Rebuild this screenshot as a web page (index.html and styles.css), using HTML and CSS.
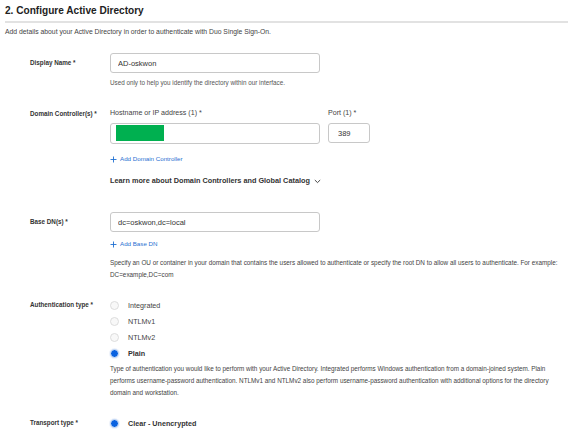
FILE: index.html
```html
<!DOCTYPE html>
<html lang="en">
<head>
    <meta charset="UTF-8">
    <title>Configure Active Directory</title>
    <link rel="stylesheet" href="styles.css">
</head>
<body>

<div class="page">
    <h2 class="step-title">2. Configure Active Directory</h2>
    <p class="intro">Add details about your Active Directory in order to authenticate with Duo Single Sign-On.</p>

    <div class="form">
        <!-- Display name -->
        <div class="field-label">Display Name *</div>
        <div class="field-body">
            <input class="text-input wide" type="text" value="AD-oskwon">
            <div class="hint">Used only to help you identify the directory within our interface.</div>
        </div>

        <!-- Domain controllers -->
        <div class="field-label">Domain Controller(s) *</div>
        <div class="field-body">
            <div class="dc-row">
                <div class="dc-col">
                    <div class="sub-label">Hostname or IP address (1) *</div>
                    <div class="text-input wide masked"><span class="redacted"></span></div>
                </div>
                <div class="dc-col">
                    <div class="sub-label">Port (1) *</div>
                    <input class="text-input port" type="text" value="389">
                </div>
            </div>
            <a class="add-link" href="#">
                <svg width="7" height="7" viewBox="0 0 7 7"><path d="M3.5 0.5v6M0.5 3.5h6" stroke="#1f6fd1" stroke-width="0.9" fill="none"/></svg>
                Add Domain Controller
            </a>
            <div class="learn-more">
                Learn more about Domain Controllers and Global Catalog
                <svg width="7" height="5" viewBox="0 0 7 5"><path d="M0.8 1l2.7 2.6L6.2 1" stroke="#333" stroke-width="0.9" fill="none"/></svg>
            </div>
        </div>

        <!-- Base DN -->
        <div class="field-label">Base DN(s) *</div>
        <div class="field-body">
            <input class="text-input wide" type="text" value="dc=oskwon,dc=local">
            <a class="add-link add-dn" href="#">
                <svg width="7" height="7" viewBox="0 0 7 7"><path d="M3.5 0.5v6M0.5 3.5h6" stroke="#1f6fd1" stroke-width="0.9" fill="none"/></svg>
                Add Base DN
            </a>
            <p class="description">Specify an OU or container in your domain that contains the users allowed to authenticate or specify the root DN to allow all users to authenticate. For example: DC=example,DC=com</p>
        </div>

        <!-- Authentication type -->
        <div class="field-label radio-label">Authentication type *</div>
        <div class="field-body">
            <div class="radio-group">
                <label class="radio"><span class="dot"></span>Integrated</label>
                <label class="radio"><span class="dot"></span>NTLMv1</label>
                <label class="radio"><span class="dot"></span>NTLMv2</label>
                <label class="radio checked"><span class="dot"></span>Plain</label>
            </div>
            <p class="description after-radios">Type of authentication you would like to perform with your Active Directory. Integrated performs Windows authentication from a domain-joined system. Plain performs username-password authentication. NTLMv1 and NTLMv2 also perform username-password authentication with additional options for the directory domain and workstation.</p>
        </div>

        <!-- Transport type -->
        <div class="field-label radio-label">Transport type *</div>
        <div class="field-body">
            <div class="radio-group">
                <label class="radio checked"><span class="dot"></span>Clear - Unencrypted</label>
            </div>
        </div>
    </div>
</div>

</body>
</html>
```

FILE: styles.css
```css
body {
    margin: 0;
    font-family: "Liberation Sans", Arial, sans-serif;
    color: #333;
    background-color: #fff;
}
.page {
    padding: 4px 2px 0 5px;
}
.step-title {
    margin: 0;
    font-size: 10.1px;
    line-height: 13px;
    font-weight: bold;
    color: #222;
    padding-bottom: 4px;
    border-bottom: 2px solid #e2e2e2;
}
.intro {
    margin: 4px 0 0;
    font-size: 6.8px;
    line-height: 10px;
    color: #444;
}

/* form grid */
.form {
    display: grid;
    grid-template-columns: 80px 1fr;
    row-gap: 16px;
    margin: 16px 0 0 25px;
}
.field-label {
    font-size: 6.3px;
    line-height: 20px;
    font-weight: bold;
    color: #333;
}
.field-label.radio-label {
    line-height: 16px;
}
.field-body {
    font-size: 6.5px;
    color: #444;
}
.text-input {
    display: block;
    box-sizing: border-box;
    height: 20px;
    margin: 0;
    padding: 0 7px;
    border: 1px solid #c8c8c8;
    border-radius: 3px;
    font-family: inherit;
    font-size: 7.5px;
    color: #333;
    background: #fff;
    outline: none;
}
.text-input.wide {
    width: 210px;
}
.text-input.port {
    width: 42px;
    padding: 0 9px;
}
.masked {
    height: 21px;
    padding: 1px 0 0 5px;
}
.redacted {
    display: block;
    width: 48px;
    height: 16px;
    background-color: #00b050;
}
.hint {
    margin-top: 5px;
    line-height: 10px;
    font-size: 6.3px;
    color: #555;
}
.dc-row {
    display: flex;
    gap: 8px;
}
.sub-label {
    line-height: 19px;
    font-size: 7.1px;
    color: #444;
}
.add-link {
    display: flex;
    align-items: center;
    gap: 3px;
    margin-top: 10px;
    line-height: 10px;
    font-size: 6.2px;
    color: #1f6fd1;
    text-decoration: none;
}
.add-link.add-dn {
    margin-top: 7px;
}
.learn-more {
    display: flex;
    align-items: center;
    gap: 4px;
    margin-top: 12px;
    margin-bottom: 10px;
    line-height: 10px;
    font-size: 7.3px;
    font-weight: bold;
    color: #333;
}
.description {
    margin: 8px 0 0;
    font-size: 6.35px;
    line-height: 12px;
    color: #444;
}
.description.after-radios {
    margin-top: 2px;
}

/* radios */
.radio {
    display: flex;
    align-items: center;
    height: 16px;
    font-size: 7.2px;
    color: #444;
}
.radio .dot {
    box-sizing: border-box;
    width: 9px;
    height: 9px;
    margin: 0 9px 0 0;
    border: 1px solid #ddd;
    border-radius: 50%;
    background-color: #f8f8f8;
}
.radio.checked {
    font-weight: bold;
    color: #333;
}
.radio.checked .dot {
    border: 1px solid #dbe7f8;
    background-color: #0a62e0;
    box-shadow: 0 0 0 1px #eef3fb;
}
```
